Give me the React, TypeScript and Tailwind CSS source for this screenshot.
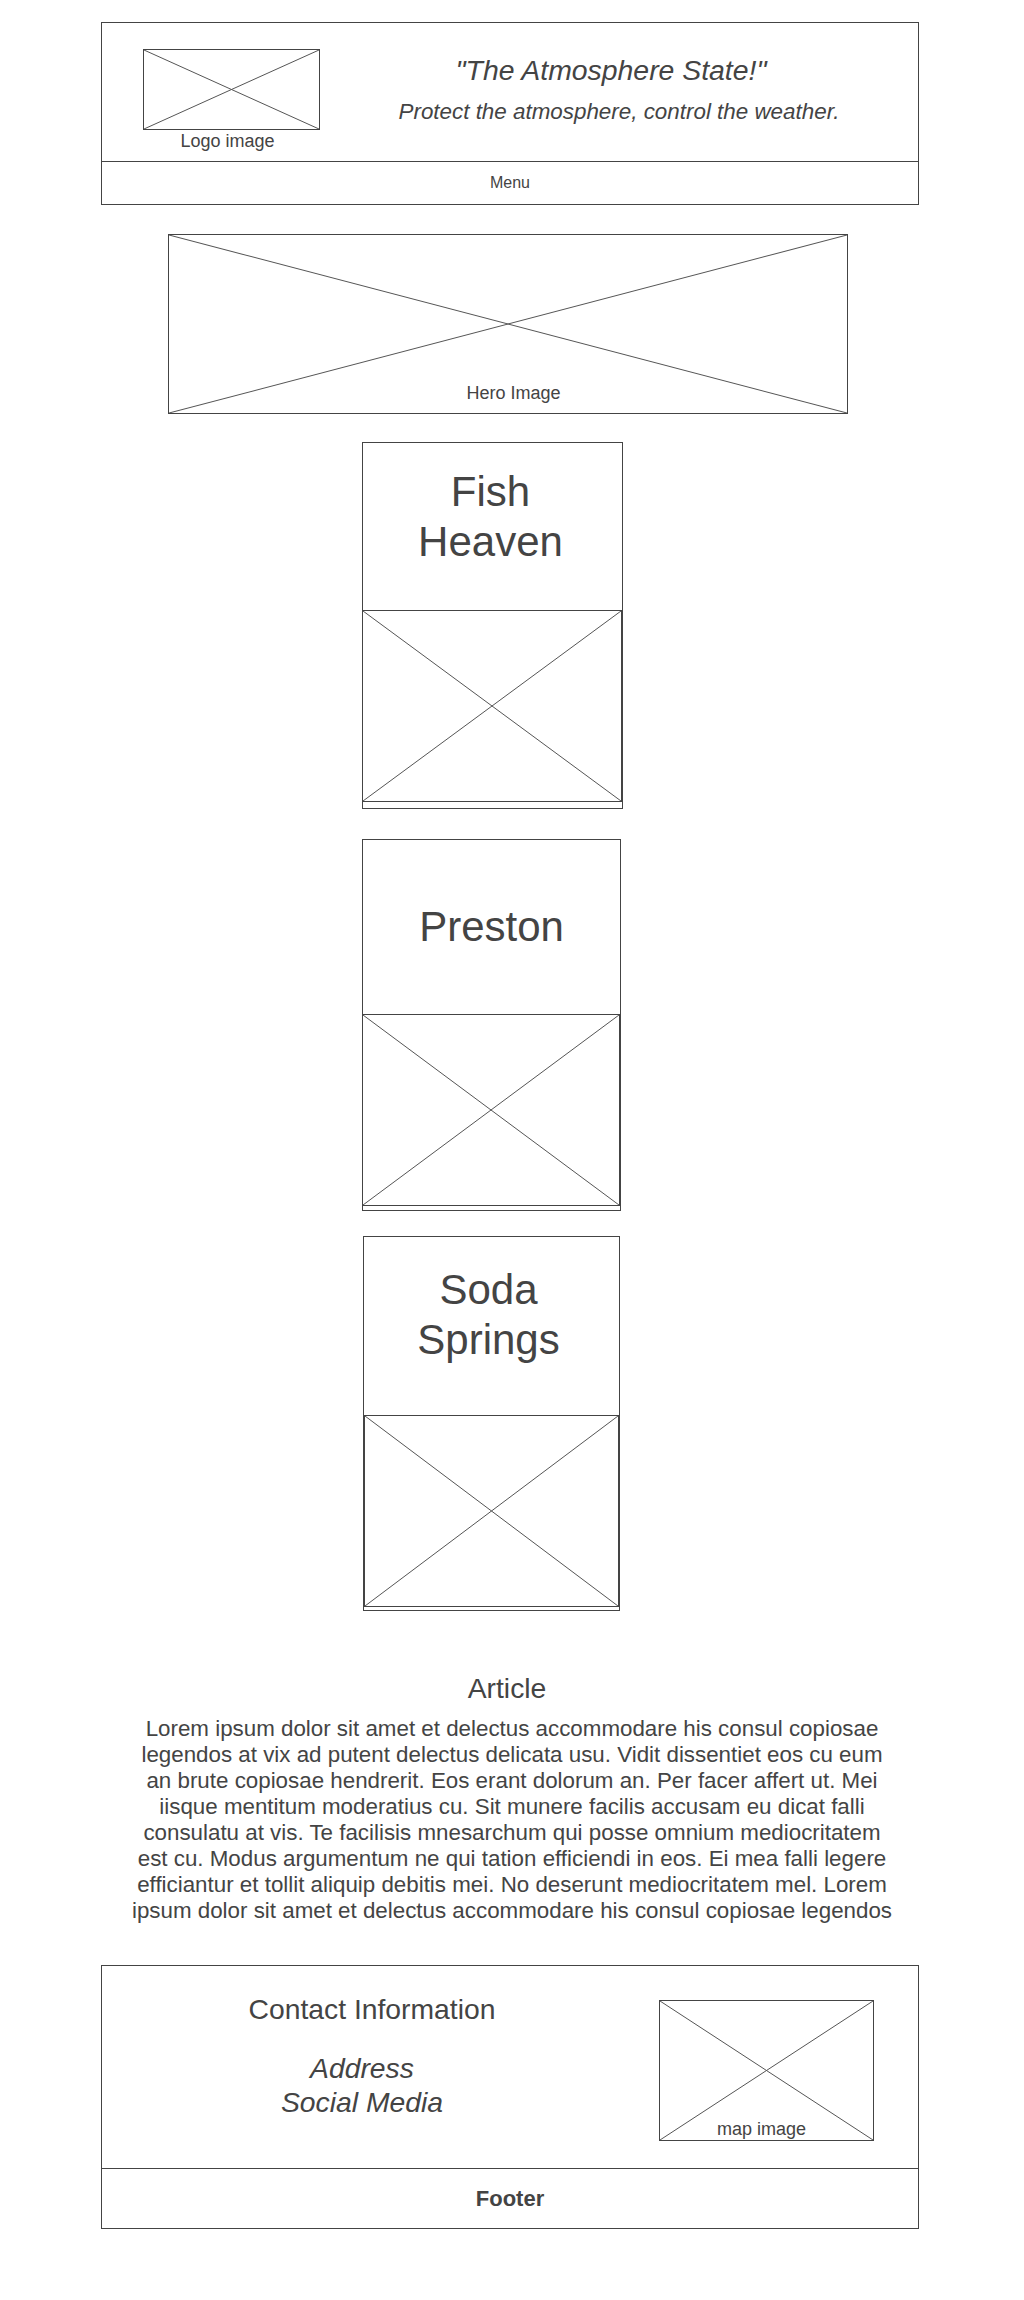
import clsx from "clsx";

// placeholder "image" — a box with an X drawn across it
function Cross() {
  return (
    <svg
      className="absolute inset-0 h-full w-full"
      viewBox="0 0 100 100"
      preserveAspectRatio="none"
    >
      <line x1="0" y1="0" x2="100" y2="100" stroke="#555" strokeWidth="1" vectorEffect="non-scaling-stroke" />
      <line x1="100" y1="0" x2="0" y2="100" stroke="#555" strokeWidth="1" vectorEffect="non-scaling-stroke" />
    </svg>
  );
}

interface CardProps {
  lines: string[];
  boxClass: string;
  titleClass: string;
  imageClass: string;
}

function TownCard({ lines, boxClass, titleClass, imageClass }: CardProps) {
  return (
    <div className={clsx("flex flex-col border border-[#444]", boxClass)}>
      <div className={clsx("flex flex-col items-center text-[42px] leading-[50px]", titleClass)}>
        {lines.map((l) => (
          <span key={l}>{l}</span>
        ))}
      </div>
      <div className={clsx("relative h-[192px] border-y border-[#444]", imageClass)}>
        <Cross />
      </div>
    </div>
  );
}

export default function App() {
  return (
    <div className="min-h-[2300px] w-[1024px] bg-white font-['Liberation_Sans',Arial,sans-serif] text-[#444]">
      {/* Header */}
      <header className="ml-[101px] w-[818px] pt-[22px]">
        <div className="flex h-[140px] border border-[#444] pl-[41px] pt-[26px]">
          <div className="flex w-[177px] flex-col items-center">
            <div className="relative h-[81px] w-full border border-[#444]">
              <Cross />
            </div>
            <span className="pr-[8px] text-[18px] leading-[22px]">Logo image</span>
          </div>
          <div className="mt-[4px] flex flex-1 flex-col items-center italic">
            <p className="pr-[16px] text-[28.4px] leading-[34px]">"The Atmosphere State!"</p>
            <p className="mt-[11px] text-[22.4px] leading-[28px]">
              Protect the atmosphere, control the weather.
            </p>
          </div>
        </div>
        <nav className="flex h-[43px] items-center justify-center border-x border-b border-[#444] text-[16px]">
          Menu
        </nav>
      </header>

      {/* Hero */}
      <div className="relative ml-[168px] mt-[29px] flex h-[180px] w-[680px] items-end justify-center border border-[#444] pb-[9px] pl-[11px]">
        <Cross />
        <span className="relative text-[18px] leading-[22px]">Hero Image</span>
      </div>

      {/* Towns */}
      <TownCard
        lines={["Fish", "Heaven"]}
        boxClass="ml-[362px] mt-[28px] w-[261px] pb-[6px]"
        titleClass="h-[167px] pt-[24px] pr-[4px]"
        imageClass="border-r"
      />
      <TownCard
        lines={["Preston"]}
        boxClass="ml-[362px] mt-[30px] w-[259px] pb-[4px]"
        titleClass="h-[174px] justify-center"
        imageClass="border-r"
      />
      <TownCard
        lines={["Soda", "Springs"]}
        boxClass="ml-[363px] mt-[25px] w-[257px] pb-[3px]"
        titleClass="h-[178px] pt-[28px] pr-[6px]"
        imageClass="border-x"
      />

      {/* Article */}
      <section className="ml-[129px] mt-[60px] w-[766px] text-center">
        <h2 className="pr-[10px] text-[28.3px] leading-[34px]">Article</h2>
        <p className="mt-[11px] text-[22.35px] leading-[26px]">
          Lorem ipsum dolor sit amet et delectus accommodare his consul copiosae legendos at vix ad
          putent delectus delicata usu. Vidit dissentiet eos cu eum an brute copiosae hendrerit. Eos
          erant dolorum an. Per facer affert ut. Mei iisque mentitum moderatius cu. Sit munere
          facilis accusam eu dicat falli consulatu at vis. Te facilisis mnesarchum qui posse omnium
          mediocritatem est cu. Modus argumentum ne qui tation efficiendi in eos. Ei mea falli legere
          efficiantur et tollit aliquip debitis mei. No deserunt mediocritatem mel. Lorem ipsum dolor
          sit amet et delectus accommodare his consul copiosae legendos
        </p>
      </section>

      {/* Footer */}
      <footer className="ml-[101px] mt-[41px] w-[818px]">
        <div className="flex h-[204px] border border-[#444]">
          <div className="flex w-[530px] flex-col items-center pt-[26px]">
            <h3 className="pl-[10px] text-[28.3px] leading-[34px]">Contact Information</h3>
            <div className="mt-[25px] flex flex-col items-center pr-[10px] text-[28.3px] italic leading-[34px]">
              <span>Address</span>
              <span>Social Media</span>
            </div>
          </div>
          <div className="relative ml-auto mr-[44px] mt-[34px] flex h-[141px] w-[215px] items-end justify-center border border-[#444] pr-[10px]">
            <Cross />
            <span className="relative text-[18px] leading-[22px]">map image</span>
          </div>
        </div>
        <div className="flex h-[60px] items-center justify-center border-x border-b border-[#444] text-[22px] font-bold">
          Footer
        </div>
      </footer>
    </div>
  );
}
